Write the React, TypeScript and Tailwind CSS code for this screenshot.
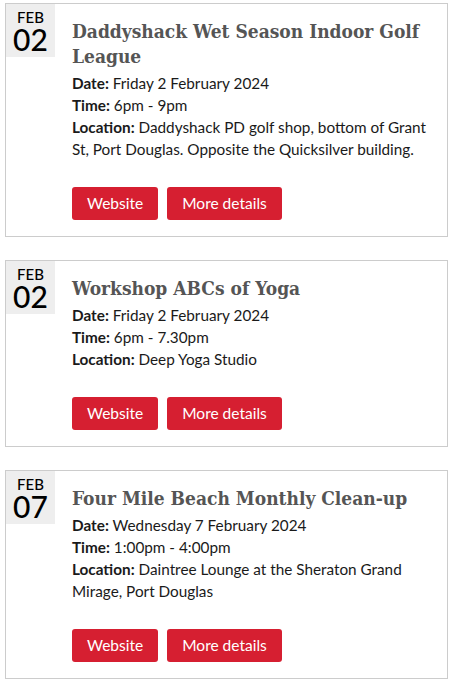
import React from 'react';

interface EventItem {
  month: string;
  day: string;
  title: string;
  date: string;
  time: string;
  location: string;
}

const events: EventItem[] = [
  {
    month: 'FEB',
    day: '02',
    title: 'Daddyshack Wet Season Indoor Golf League',
    date: 'Friday 2 February 2024',
    time: '6pm - 9pm',
    location: 'Daddyshack PD golf shop, bottom of Grant St, Port Douglas. Opposite the Quicksilver building.',
  },
  {
    month: 'FEB',
    day: '02',
    title: 'Workshop ABCs of Yoga',
    date: 'Friday 2 February 2024',
    time: '6pm - 7.30pm',
    location: 'Deep Yoga Studio',
  },
  {
    month: 'FEB',
    day: '07',
    title: 'Four Mile Beach Monthly Clean-up',
    date: 'Wednesday 7 February 2024',
    time: '1:00pm - 4:00pm',
    location: 'Daintree Lounge at the Sheraton Grand Mirage, Port Douglas',
  },
];

function EventCard({ ev }: { ev: EventItem }) {
  return (
    <div className="flex border border-[#cccccc] bg-white">
      {/* Date badge */}
      <div className="w-[49px] h-[53px] shrink-0 bg-[#eeeeee] flex flex-col items-center pt-[5px] text-black">
        <span className="text-[15px] leading-[16px] font-medium">{ev.month}</span>
        <span className="text-[30px] leading-[28px] font-medium">{ev.day}</span>
      </div>

      {/* Body */}
      <div className="flex-1 pl-[17px] pr-[12px] pt-[15px] pb-[16px]">
        <h3 className="font-['DejaVu_Serif_Condensed','DejaVu_Serif',serif] font-bold text-[19px] leading-[25px] text-[#555555]">
          {ev.title}
        </h3>
        <div className="mt-[3px] text-[15.3px] leading-[22px] text-[#1a1a1a]">
          <p><b>Date:</b> {ev.date}</p>
          <p><b>Time:</b> {ev.time}</p>
          <p><b>Location:</b> {ev.location}</p>
        </div>
        <div className="flex gap-[9px] mt-[27px]">
          <button className="h-[33px] px-[15px] rounded-[3px] bg-[#d61f31] text-white text-[15.5px]">Website</button>
          <button className="h-[33px] px-[15px] rounded-[3px] bg-[#d61f31] text-white text-[15.5px]">More details</button>
        </div>
      </div>
    </div>
  );
}

export default function App() {
  return (
    <div className="w-[452px] min-h-[686px] bg-white pl-[5px] pr-[4px] pt-[3px] font-['Lato',sans-serif]">
      <div className="flex flex-col gap-[23px]">
        {events.map((ev, i) => (
          <EventCard key={i} ev={ev} />
        ))}
      </div>
    </div>
  );
}
